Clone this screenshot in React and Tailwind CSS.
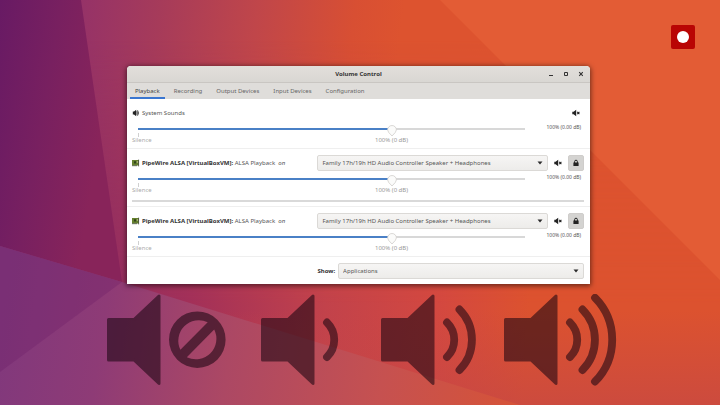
import React from "react";

const tabs = ["Playback", "Recording", "Output Devices", "Input Devices", "Configuration"];

const device = "Family 17h/19h HD Audio Controller Speaker + Headphones";

const streams = [
  { id: "system", title: "System Sounds" },
  { id: "vm-1", app: "PipeWire ALSA [VirtualBoxVM]:", title: "ALSA Playback", meter: true },
  { id: "vm-2", app: "PipeWire ALSA [VirtualBoxVM]:", title: "ALSA Playback" }
];

const Wallpaper = () => (
  <svg className="absolute inset-0 size-full" viewBox="0 0 720 405" preserveAspectRatio="none" aria-hidden="true">
    <defs>
      <linearGradient id="base" gradientUnits="userSpaceOnUse" x1="80" y1="0" x2="400" y2="40">
        <stop offset="0" stopColor="#953268" />
        <stop offset="0.25" stopColor="#a63b5a" />
        <stop offset="0.55" stopColor="#c0464a" />
        <stop offset="0.85" stopColor="#d84f33" />
        <stop offset="1" stopColor="#dd532f" />
      </linearGradient>
      <linearGradient id="lowerBase" gradientUnits="userSpaceOnUse" x1="80" y1="260" x2="530" y2="290">
        <stop offset="0" stopColor="#8c2a62" />
        <stop offset="0.25" stopColor="#a23059" />
        <stop offset="0.55" stopColor="#c2424b" />
        <stop offset="0.8" stopColor="#d34840" />
        <stop offset="1" stopColor="#dc522f" />
      </linearGradient>
      <linearGradient id="fade" x1="0" y1="0" x2="0" y2="1">
        <stop offset="0.1" stopColor="#fff" stopOpacity="0" />
        <stop offset="0.75" stopColor="#fff" />
      </linearGradient>
      <mask id="fadeMask">
        <rect width="720" height="405" fill="url(#fade)" />
      </mask>
      <linearGradient id="floor" gradientUnits="userSpaceOnUse" x1="0" y1="310" x2="0" y2="405">
        <stop offset="0" stopColor="#c24648" stopOpacity="0" />
        <stop offset="1" stopColor="#c24648" stopOpacity="0.6" />
      </linearGradient>
      <linearGradient id="left" gradientUnits="userSpaceOnUse" x1="0" y1="0" x2="120" y2="20">
        <stop offset="0" stopColor="#681a64" />
        <stop offset="0.5" stopColor="#782060" />
        <stop offset="1" stopColor="#88245a" />
      </linearGradient>
      <linearGradient id="lower" gradientUnits="userSpaceOnUse" x1="0" y1="320" x2="510" y2="400">
        <stop offset="0" stopColor="#81387c" />
        <stop offset="0.2" stopColor="#8e3b76" />
        <stop offset="0.45" stopColor="#ac4864" />
        <stop offset="0.75" stopColor="#c65150" />
        <stop offset="1" stopColor="#d55339" />
      </linearGradient>
    </defs>
    <rect width="720" height="405" fill="url(#base)" />
    <rect width="720" height="405" fill="url(#lowerBase)" mask="url(#fadeMask)" />
    <rect y="310" width="720" height="95" fill="url(#floor)" />
    <path d="M0 0H81L122 282L0 246Z" fill="url(#left)" />
    <path d="M440 0H720V280Z" fill="#e35c35" />
    <path d="M0 246L122 282L520 405H0Z" fill="url(#lower)" />
    <path d="M122 282L0 372V246Z" fill="#681a64" fillOpacity="0.28" />
  </svg>
);

const MuteIcon = () => (
  <svg viewBox="0 0 8 8" className="size-2" fill="#222" aria-hidden="true">
    <path d="M0.3 2.7H1.6L4.2 0.7V7.3L1.6 5.3H0.3Z" />
    <path d="M5.2 2.9L7.4 5.1M7.4 2.9L5.2 5.1" stroke="#222" strokeWidth="1.1" />
  </svg>
);

const SoundIcon = () => (
  <svg viewBox="0 0 8 8" className="size-2" fill="#222" aria-hidden="true">
    <path d="M0.8 2.6H2L4.2 0.8V7.2L2 5.4H0.8Z" />
    <path d="M4.8 2.4Q5.6 4 4.8 5.6M5.6 1.4Q7.2 4 5.6 6.6" fill="none" stroke="#333" strokeWidth="1" />
  </svg>
);

const CardIcon = () => (
  <svg viewBox="0 0 8 8" className="size-2" aria-hidden="true">
    <path d="M0 1H7V6.6H0Z" fill="#66812f" />
    <path d="M2 2.2H4.2V4.6H2Z" fill="#2f421b" />
    <path d="M6.6 0.6V7.4M0 6.7H5" stroke="#4b5141" strokeWidth="0.8" />
    <path d="M4.8 2H5.8V4H4.8Z" fill="#b5bd82" />
  </svg>
);

const LockIcon = () => (
  <svg viewBox="0 0 8 8" className="size-2" aria-hidden="true">
    <path d="M1.4 3.6H6.6V7H1.4Z" fill="#222" />
    <path d="M2.6 4V2.6A1.4 1.4 0 0 1 5.4 2.6V4" fill="none" stroke="#222" strokeWidth="1" />
  </svg>
);

const Dropdown = ({ id, value, label, className }) => (
  <div className={`relative ${className}`}>
    <select
      id={id}
      aria-label={label}
      className="block h-4 w-full appearance-none rounded-xs border border-[#dbd9d6] bg-linear-to-b from-[#f6f5f4] to-[#edecea] pl-1 text-[6px] leading-3 text-[#555]"
    >
      <option>{value}</option>
    </select>
    <svg viewBox="0 0 6 4" className="pointer-events-none absolute top-1.5 right-[5px] h-1 w-1.5" aria-hidden="true">
      <path d="M0.5 0.4H5.5L3 3.5Z" fill="#2b2b2b" />
    </svg>
  </div>
);

const VolumeSlider = ({ label }) => (
  <div className="relative mr-[59px] ml-1.5 h-[23px]">
    <div className="flex h-2 items-center">
      <div className="h-0.5 w-[65.5%] bg-[#4a80c6]" />
      <div className="h-0.5 flex-1 bg-[#d8d8d8]" />
    </div>
    <input
      type="range"
      min="0"
      max="153"
      defaultValue="100"
      aria-label={label}
      className="absolute inset-x-0 top-0 h-2 w-full opacity-0"
    />
    <svg viewBox="0 0 10 12" className="pointer-events-none absolute top-0 left-[65.5%] h-3 w-2.5 -translate-x-1/2" aria-hidden="true">
      <path d="M5 0.5A4.4 4.4 0 0 1 9.4 4.9Q9.4 7 5 11Q0.6 7 0.6 4.9A4.4 4.4 0 0 1 5 0.5Z" fill="#fbfbfa" stroke="#d0cecb" strokeWidth="0.8" />
    </svg>
    <div className="h-1 w-px bg-[#d0d0d0]" />
    <span className="absolute top-[11px] -left-1.5 text-[6px] leading-2 text-[#aaa]">Silence</span>
    <span className="absolute top-[11px] left-[65.5%] -translate-x-1/2 text-[6px] leading-2 text-[#999]">100% (0 dB)</span>
  </div>
);

const Stream = ({ stream }) => (
  <section className="border-b border-[#efefef] pt-1.5 pr-1.5 pl-[5px]">
    <div className="flex h-4 items-center">
      {stream.app ? <CardIcon /> : <SoundIcon />}
      <h2 className="ml-0.5 flex-1 text-[6px] whitespace-pre text-[#555]">
        {stream.app && <b className="text-[#333]">{stream.app} </b>}
        {stream.title}
        {stream.app && <i>  on</i>}
      </h2>
      {stream.app && <Dropdown value={device} label="Output device" className="w-[51%]" />}
      <button type="button" aria-label="Mute" className={stream.app ? "mx-1.5" : "mr-1"}>
        <MuteIcon />
      </button>
      {stream.app && (
        <button type="button" aria-label="Lock channels" className="flex size-4 items-center justify-center rounded-xs border border-[#cfcdcb] bg-[#d4d3d1]">
          <LockIcon />
        </button>
      )}
    </div>
    <div className="relative pt-1">
      <VolumeSlider label={`${stream.title} volume`} />
      <output className="absolute top-0.5 right-[3px] text-[5px] leading-2 text-[#555]">100% (0.00 dB)</output>
    </div>
    {stream.meter && <div className="mt-0.5 mb-1 h-0.5 bg-[#d9d9d9]" />}
  </section>
);

const MixerWindow = () => (
  <main className="relative mx-auto w-[64.6%] overflow-hidden rounded-t-sm bg-white shadow-[0_1px_5px_1px_rgba(0,0,0,0.5)]">
    <header className="flex h-[17px] items-center border-b border-[#c9c6c2] bg-linear-to-b from-[#e2dfdb] to-[#d9d7d3]">
      <h1 className="flex-1 pl-[43px] text-center text-[6px] font-bold text-[#333]">Volume Control</h1>
      <div className="flex gap-[7px] pr-[5px]">
        <button type="button" aria-label="Minimize">
          <svg viewBox="0 0 8 8" className="size-2"><path d="M2 5.5H6" stroke="#333" /></svg>
        </button>
        <button type="button" aria-label="Maximize">
          <svg viewBox="0 0 8 8" className="size-2"><path d="M2.5 2.5H5.5V5.5H2.5Z" fill="none" stroke="#333" /></svg>
        </button>
        <button type="button" aria-label="Close">
          <svg viewBox="0 0 8 8" className="size-2"><path d="M2.2 2.2L5.8 5.8M5.8 2.2L2.2 5.8" stroke="#333" strokeWidth="1.1" /></svg>
        </button>
      </div>
    </header>

    <nav className="flex h-4 gap-1 bg-[#dfddda] px-[3px]">
      {tabs.map((tab, i) => (
        <button
          key={tab}
          type="button"
          className={`border-b-2 px-[5px] pt-0.5 text-[6px] ${i === 0 ? "border-[#3a76d0] text-[#444]" : "border-transparent text-[#666]"}`}
        >
          {tab}
        </button>
      ))}
    </nav>

    {streams.map((stream) => (
      <Stream key={stream.id} stream={stream} />
    ))}

    <footer className="flex items-center gap-[3px] pt-1.5 pr-1.5 pb-[5px] pl-[5px]">
      <label htmlFor="show" className="flex-1 text-right text-[6px] font-bold text-[#333]">Show:</label>
      <Dropdown id="show" value="Applications" className="w-[54.4%]" />
    </footer>
  </main>
);

const waves = [
  "M66 28.5A24.2 24.2 0 0 1 66 63",
  "M78.5 15.5A43 43 0 0 1 78.5 76",
  "M91 3.8A59.6 59.6 0 0 1 91 87.6"
];

const Speaker = ({ level, width }) => (
  <svg viewBox={`0 0 ${width} 92`} width={width} height="92" opacity="0.56" aria-hidden="true">
    <path d="M1.5 25.5H27L52 2V89.5L27 66H1.5Z" fill="#180410" stroke="#180410" strokeWidth="3" strokeLinejoin="round" />
    {waves.slice(0, level).map((d) => (
      <path key={d} d={d} fill="none" stroke="#180410" strokeWidth="7.8" strokeLinecap="round" />
    ))}
    {level === 0 && (
      <path
        d="M62 45.7A28.3 28.3 0 0 1 118.6 45.7A28.3 28.3 0 0 1 62 45.7ZM73.4 55.8L100.7 28.3A20.5 20.5 0 0 0 73.4 55.8ZM107.2 35.6L79.8 63.2A20.5 20.5 0 0 0 107.2 35.6Z"
        fill="#180410"
        fillRule="evenodd"
      />
    )}
  </svg>
);

const App = () => {
  return (
    <div className="relative min-h-screen overflow-hidden pt-[66px] font-['Noto_Sans',sans-serif]">
      <Wallpaper />

      <button
        type="button"
        aria-label="Record"
        className="absolute top-[25px] right-[25px] flex size-6 items-center justify-center rounded-xs bg-[#b90504]"
      >
        <span className="size-3 rounded-full bg-white" />
      </button>

      <div className="pr-[3px]">
        <MixerWindow />
      </div>

      {/* Volume levels */}
      <div className="relative mt-[10px] flex justify-center gap-[27px] pl-1">
        <Speaker level={0} width={127} />
        <Speaker level={1} width={93} />
        <Speaker level={2} width={96} />
        <Speaker level={3} width={113} />
      </div>
    </div>
  );
};

export default App;
